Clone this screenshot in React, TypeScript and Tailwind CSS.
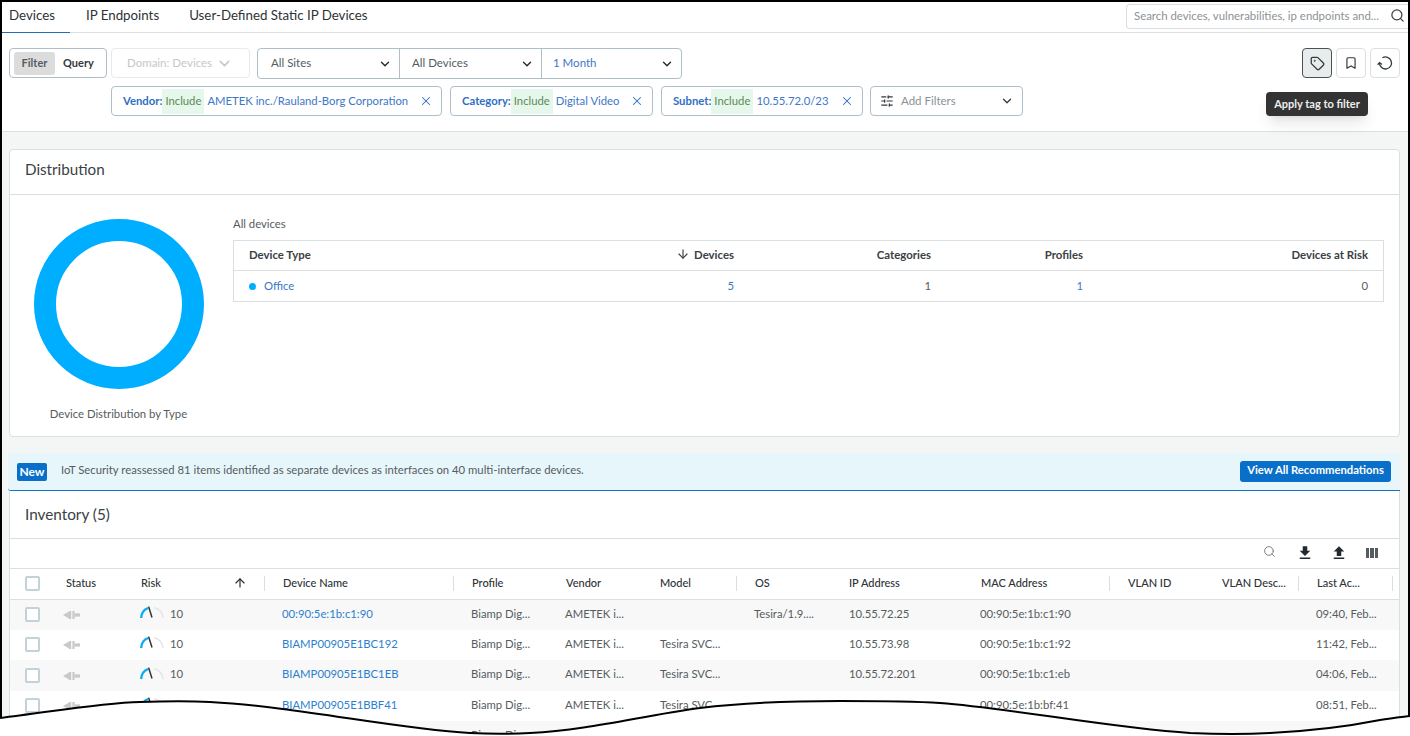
import { ArrowDown, ArrowUp, Bookmark, ChevronDown, Search, SlidersHorizontal, Tag, X } from 'lucide-react';
import { MdFileDownload, MdFileUpload } from 'react-icons/md';

const chips = [
  { label: 'Vendor:', value: 'AMETEK inc./Rauland-Borg Corporation', width: 'w-[331px]' },
  { label: 'Category:', value: 'Digital Video', width: 'w-[203px]' },
  { label: 'Subnet:', value: '10.55.72.0/23', width: 'w-[202px]' },
];

const headers = [
  { name: 'Profile' },
  { name: 'Vendor' },
  { name: 'Model', sep: true },
  { name: 'OS' },
  { name: 'IP Address' },
  { name: 'MAC Address', sep: true },
  { name: 'VLAN ID' },
  { name: 'VLAN Desc...', sep: true },
  { name: 'Last Ac...', sep: true },
];

const devices = [
  { name: '00:90:5e:1b:c1:90', model: '', os: 'Tesira/1.9....', ip: '10.55.72.25', mac: '00:90:5e:1b:c1:90', last: '09:40, Feb...' },
  { name: 'BIAMP00905E1BC192', model: 'Tesira SVC...', os: '', ip: '10.55.73.98', mac: '00:90:5e:1b:c1:92', last: '11:42, Feb...' },
  { name: 'BIAMP00905E1BC1EB', model: 'Tesira SVC...', os: '', ip: '10.55.72.201', mac: '00:90:5e:1b:c1:eb', last: '04:06, Feb...' },
  { name: 'BIAMP00905E1BBF41', model: 'Tesira SVC...', os: '', ip: '', mac: '00:90:5e:1b:bf:41', last: '08:51, Feb...' },
  { name: '', model: '', os: '', ip: '', mac: '', last: '' },
];

const gridCols = 'grid grid-cols-[38px_75px_142px_189px_94px_94px_95px_94px_132px_147px_94px_95px_94px]';

const edge =
  'M0 718C50 712 100 703 140 702C170 701 190 701 210 702C300 707 390 728 470 733C490 734 510 734 530 733C590 730 640 716 700 708C750 702 800 701 840 701C870 701 910 701 940 703C1010 708 1110 728 1190 733C1215 734 1250 734 1270 733C1310 731 1350 726 1380 720C1392 718 1402 717 1410 716';

function Checkbox() {
  return <span className="block h-[15px] w-[15px] rounded-[2px] border-2 border-[#c3d1d9] bg-white" />;
}

function StatusIcon() {
  return (
    <svg width="17" height="8" viewBox="0 0 17 8" fill="#c9c9c9">
      <path d="M0 4l6-3.5v7z" />
      <rect x="6" y="0" width="2.2" height="8" />
      <rect x="9.4" y="0" width="2.2" height="8" />
      <rect x="11.6" y="2.4" width="5.4" height="3.2" />
    </svg>
  );
}

function RiskGauge() {
  return (
    <svg width="24" height="12" viewBox="0 0 24 12" fill="none" className="-mt-[6px]">
      <path d="M14 1.6A11 11 0 0 1 23 12" stroke="#e3e3e3" strokeWidth="1.4" />
      <path d="M1.2 12A11 11 0 0 1 8 2" stroke="#07aef5" strokeWidth="2.4" />
      <path d="M8.6 0.6L12 11.5" stroke="#333333" strokeWidth="1.5" />
    </svg>
  );
}

function ResetIcon() {
  return (
    <svg width="16" height="16" viewBox="0 0 16 16" fill="none" stroke="#33393c" strokeWidth="1.3">
      <path d="M5.5 2.8A6 6 0 1 1 2.5 8" />
      <path d="M0.6 9.8L2.6 7.6L5 9.4" />
    </svg>
  );
}

function ToolbarIcon({ active, children }: { active?: boolean; children: React.ReactNode }) {
  return (
    <button className={`flex h-[30px] w-[30px] items-center justify-center rounded-[4px] border ${active ? 'border-[#4a5256] bg-[#e9ecec]' : 'border-[#dcdfe0] bg-white'}`}>
      {children}
    </button>
  );
}

function SelectBox({ label, blue, box }: { label: string; blue?: boolean; box: string }) {
  return (
    <div className={`flex h-full items-center justify-between border-r border-[#aebfc8] pr-[7px] last:border-r-0 ${box}`}>
      <span className={`pb-[2px] text-[11.5px] ${blue ? 'text-[#3c77c9]' : 'text-[#555c60]'}`}>{label}</span>
      <ChevronDown size={14} strokeWidth={2.4} className="text-[#23292c]" />
    </div>
  );
}

export default function App() {
  return (
    <div className="relative h-[736px] w-[1410px] overflow-hidden">
      <div className="h-full border-x-2 border-t-2 border-black bg-[#f4f5f5] font-['Lato',sans-serif] text-[11.3px] text-[#555c60]">
        {/* tabs */}
        <div className="flex h-[31px] items-stretch justify-between border-b border-[#dcdfe0] bg-white">
          <div className="flex text-[13.3px] text-[#2d3336]">
            <div className="-mb-px flex w-[68px] items-center border-b-[1.5px] border-[#1f6fb8] pb-[2px] pl-[7px]">Devices</div>
            <div className="ml-[16px] flex items-center pb-[3px]">IP Endpoints</div>
            <div className="ml-[30px] flex items-center pb-[3px]">User-Defined Static IP Devices</div>
          </div>
          <div className="mt-[2px] flex h-[25px] w-[282px] items-center justify-between rounded-l-[4px] border border-r-0 border-[#dcdfe0] pb-[2px] pl-[7px] pr-[3px] text-[11.4px] text-[#8b9296]">
            <span>Search devices, vulnerabilities, ip endpoints and...</span>
            <Search size={15} className="text-[#3a4144]" />
          </div>
        </div>

        {/* filters */}
        <div className="relative h-[99px] border-b border-[#dcdfe0] bg-white pl-[7px] pr-[8px] pt-[15px]">
          <div className="flex items-start">
            <div className="flex h-[30px] w-[98px] items-center rounded-[4px] border border-[#aebfc8] pl-[4px] text-[11px] font-bold">
              <span className="flex h-[23px] w-[41px] items-center justify-center rounded-[3px] bg-[#dcdcdc] text-[#555c60]">Filter</span>
              <span className="ml-[8px] text-[#33393c]">Query</span>
            </div>
            <div className="ml-[4px] flex h-[30px] w-[139px] items-center rounded-[4px] border border-[#e8eaeb] pl-[15px] text-[11.5px] text-[#c4c8ca]">
              Domain: Devices
              <ChevronDown size={17} strokeWidth={2.2} className="ml-[4px]" />
            </div>
            <div className="ml-[7px] flex h-[31px] w-[425px] items-center rounded-[4px] border border-[#aebfc8]">
              <SelectBox label="All Sites" box="w-[142px] pl-[13px]" />
              <SelectBox label="All Devices" box="w-[142px] pl-[12px]" />
              <SelectBox label="1 Month" blue box="w-[139px] pl-[11px]" />
            </div>
            <div className="ml-auto flex gap-[4px]">
              <ToolbarIcon active>
                <Tag size={15} className="text-[#33393c]" />
              </ToolbarIcon>
              <ToolbarIcon>
                <Bookmark size={14} className="text-[#33393c]" />
              </ToolbarIcon>
              <ToolbarIcon>
                <ResetIcon />
              </ToolbarIcon>
            </div>
          </div>

          <div className="ml-[102px] mt-[7px] flex items-center gap-[8px] text-[11.3px]">
            {chips.map((chip) => (
              <div key={chip.label} className={`flex h-[30px] items-center rounded-[4px] border border-[#aebfc8] pl-[11px] ${chip.width}`}>
                <span className="font-bold text-[#2f6fc4]">{chip.label}</span>
                <span className="flex h-[25px] items-center bg-[#e6f7ec] px-[3px] text-[#5c8a55]">Include</span>
                <span className="ml-[3px] text-[#3c77c9]">{chip.value}</span>
                <X size={14} strokeWidth={1.8} className="ml-auto mr-[8px] text-[#2f6fc4]" />
              </div>
            ))}
            <div className="ml-[-1px] flex h-[30px] w-[153px] items-center rounded-[4px] border border-[#aebfc8] pl-[9px] pr-[8px] text-[11.5px] text-[#8b9296]">
              <SlidersHorizontal size={14} className="text-[#33393c]" />
              <span className="ml-[7px]">Add Filters</span>
              <ChevronDown size={14} strokeWidth={2.2} className="ml-auto text-[#33393c]" />
            </div>
          </div>

          <div className="absolute left-[1264px] top-[59px] flex h-[24px] w-[102px] items-center justify-center rounded-[4px] bg-[#333333] text-[11px] font-bold text-[#eeeeee] shadow-lg">
            Apply tag to filter
          </div>
        </div>

        {/* distribution */}
        <div className="ml-[7px] mr-[8px] mt-[17px] h-[288px] rounded-[4px] border border-[#dcdfe0] bg-white">
          <div className="flex h-[45px] items-center border-b border-[#dcdfe0] pb-[5px] pl-[15px] text-[15.2px] text-[#3a4144]">Distribution</div>
          <div className="flex">
            <div className="flex w-[217px] flex-col items-center pt-[24px]">
              <div className="h-[170px] w-[170px] rounded-full border-[22px] border-[#00aeff]" />
              <div className="mt-[17px]">Device Distribution by Type</div>
            </div>
            <div className="ml-[6px] w-[1151px] pt-[21px]">
              <div className="leading-[16px]">All devices</div>
              <div className="mt-[8px] border border-[#dcdfe0]">
                <div className="flex h-[30px] items-center border-b border-[#dcdfe0] pb-[2px] pl-[15px] pr-[15px] text-[11.4px] font-bold text-[#3a4144]">
                  <span className="w-[424px]">Device Type</span>
                  <span className="flex w-[61px] items-center justify-end"><ArrowDown size={14} className="mr-[4px]" />Devices</span>
                  <span className="w-[197px] text-right">Categories</span>
                  <span className="w-[152px] text-right">Profiles</span>
                  <span className="ml-auto">Devices at Risk</span>
                </div>
                <div className="flex h-[30px] items-center pl-[15px] pr-[15px]">
                  <span className="flex w-[424px] items-center text-[#3c77c9]">
                    <span className="mr-[8px] h-[7px] w-[7px] rounded-full bg-[#00aeff]" />
                    Office
                  </span>
                  <span className="w-[61px] text-right text-[#3c77c9]">5</span>
                  <span className="w-[197px] text-right">1</span>
                  <span className="w-[152px] text-right text-[#3c77c9]">1</span>
                  <span className="ml-auto">0</span>
                </div>
              </div>
            </div>
          </div>
        </div>

        {/* recommendation banner */}
        <div className="ml-[6px] mr-[8px] mt-[16px] flex h-[38px] items-center justify-between rounded-bl-[3px] border-b-[1.5px] border-[#1173c5] bg-[#e7f6fb] pl-[9px] pr-[9px]">
          <div className="flex items-center">
            <span className="flex h-[18px] w-[30px] items-center justify-center rounded-[2px] bg-[#0a6fc9] text-[12px] font-bold text-white">New</span>
            <span className="ml-[14px] pb-[2px]">IoT Security reassessed 81 items identified as separate devices as interfaces on 40 multi-interface devices.</span>
          </div>
          <button className="flex h-[21px] w-[151px] items-center justify-center rounded-[3px] bg-[#0a6fc9] pb-[2px] text-[11.25px] font-bold text-white">View All Recommendations</button>
        </div>

        {/* inventory */}
        <div className="ml-[7px] mr-[8px] h-[300px] border-x border-[#dcdfe0] bg-white">
          <div className="flex h-[48px] items-center border-b border-[#dcdfe0] pb-[1px] pl-[15px] text-[15.3px] text-[#3a4144]">Inventory (5)</div>
          <div className="flex h-[30px] items-center justify-end border-b border-[#dcdfe0] pb-[2px] pr-[21px] text-[#23292c]">
            <Search size={13} strokeWidth={1.6} className="mb-[2px] mr-[20px] text-[#6b7275]" />
            <MdFileDownload size={18} className="mr-[16px]" />
            <MdFileUpload size={18} className="mr-[18px]" />
            <div className="flex h-[10px] w-[12px] gap-[1px]">
              <span className="flex-1 bg-[#555c60]" />
              <span className="flex-1 bg-[#555c60]" />
              <span className="flex-1 bg-[#555c60]" />
            </div>
          </div>

          <div className={`${gridCols} h-[31px] items-center border-b border-[#dcdfe0] pb-[2px] text-[11px] font-medium text-[#2d3336]`}>
            <div className="pl-[15px]"><Checkbox /></div>
            <div className="pl-[18px]">Status</div>
            <div className="flex h-[15px] items-center border-r border-[#dcdfe0] pl-[18px] pr-[17px]">
              <span>Risk</span>
              <ArrowUp size={14} className="ml-auto text-[#23292c]" />
            </div>
            <div className="flex h-[15px] items-center border-r border-[#dcdfe0] pl-[18px]">Device Name</div>
            {headers.map((h) => (
              <div key={h.name} className={`flex h-[15px] items-center pl-[18px] ${h.sep ? 'border-r border-[#dcdfe0]' : ''}`}>{h.name}</div>
            ))}
          </div>

          {devices.map((d, i) => (
            <div key={i} className={`${gridCols} items-center ${i === 2 ? 'h-[31px]' : 'h-[30px]'} ${i % 2 === 0 ? 'bg-[#f8f8f8]' : 'bg-white'}`}>
              <div className="pb-[1px] pl-[15px]"><Checkbox /></div>
              <div className="pl-[15px]"><StatusIcon /></div>
              <div className="flex items-center pl-[17px]">
                <RiskGauge />
                <span className="ml-[6px] pb-[2px]">10</span>
              </div>
              <div className="pb-[2px] pl-[17px] text-[#2b7fcf]">{d.name}</div>
              <div className="pb-[2px] pl-[17px]">Biamp Dig...</div>
              <div className="pb-[2px] pl-[17px]">AMETEK i...</div>
              <div className="pb-[2px] pl-[18px]">{d.model}</div>
              <div className="pb-[2px] pl-[17px]">{d.os}</div>
              <div className="pb-[2px] pl-[18px]">{d.ip}</div>
              <div className="pb-[2px] pl-[17px]">{d.mac}</div>
              <div />
              <div />
              <div className="pb-[2px] pl-[17px]">{d.last}</div>
            </div>
          ))}
        </div>
      </div>

      {/* torn edge */}
      <svg className="absolute left-0 top-0" width="1410" height="736" viewBox="0 0 1410 736" fill="none">
        <path d={`${edge}V736H0Z`} fill="#ffffff" />
        <path d={edge} stroke="#000000" strokeWidth="2" />
      </svg>
    </div>
  );
}
